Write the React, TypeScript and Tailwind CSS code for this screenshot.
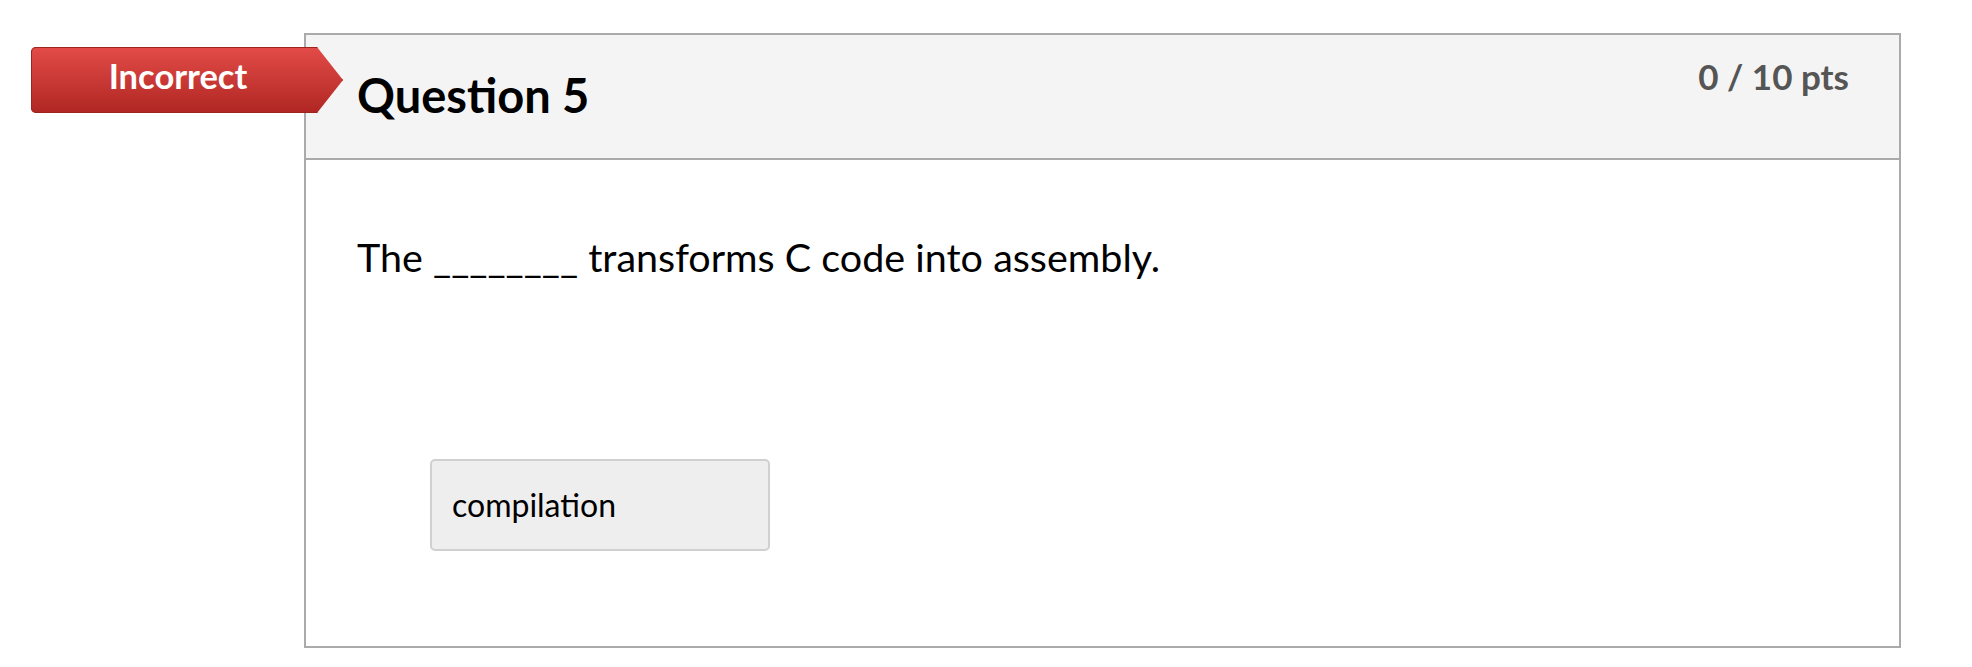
export default function App() {
  return (
    <div className="min-h-screen bg-white font-['Lato','Liberation_Sans',sans-serif] text-black">
      <div className="relative pl-[304px] pr-[71px] pt-[33px]">
        {/* result badge, sits over the card's left edge */}
        <div className="absolute left-[31px] top-[47px] z-10 h-[66px] w-[312px] rounded-l-[5px] bg-gradient-to-b from-[#e34b48] to-[#b02622] shadow-[inset_0_0_0_1px_#9e2420] [clip-path:polygon(0_0,286px_0,100%_50%,286px_100%,0_100%)]">
          <div className="flex w-[286px] justify-center pl-[8px] pt-[12px] text-[34.5px] font-bold leading-none text-white">
            Incorrect
          </div>
        </div>

        <div className="border-2 border-[#aaaaaa] bg-white">
          <div className="flex h-[125px] items-start justify-between border-b-2 border-[#aaaaaa] bg-[#f4f4f4] pl-[51px] pr-[50px]">
            <h2 className="pt-[37px] text-[47px] font-bold leading-none">Question 5</h2>
            <div className="pt-[24px] text-[35px] font-bold leading-none text-[#555555]">0 / 10 pts</div>
          </div>

          <div className="pb-[95px] pl-[51px] pt-[77px]">
            <p className="text-[39.5px] leading-none">The ________ transforms C code into assembly.</p>
            <div className="ml-[73px] mt-[182px] flex h-[92px] w-[340px] items-center rounded-[5px] border-2 border-[#d0d0d0] bg-[#eeeeee] pl-[20px]">
              <span className="text-[32px] leading-none">compilation</span>
            </div>
          </div>
        </div>
      </div>
    </div>
  );
}
